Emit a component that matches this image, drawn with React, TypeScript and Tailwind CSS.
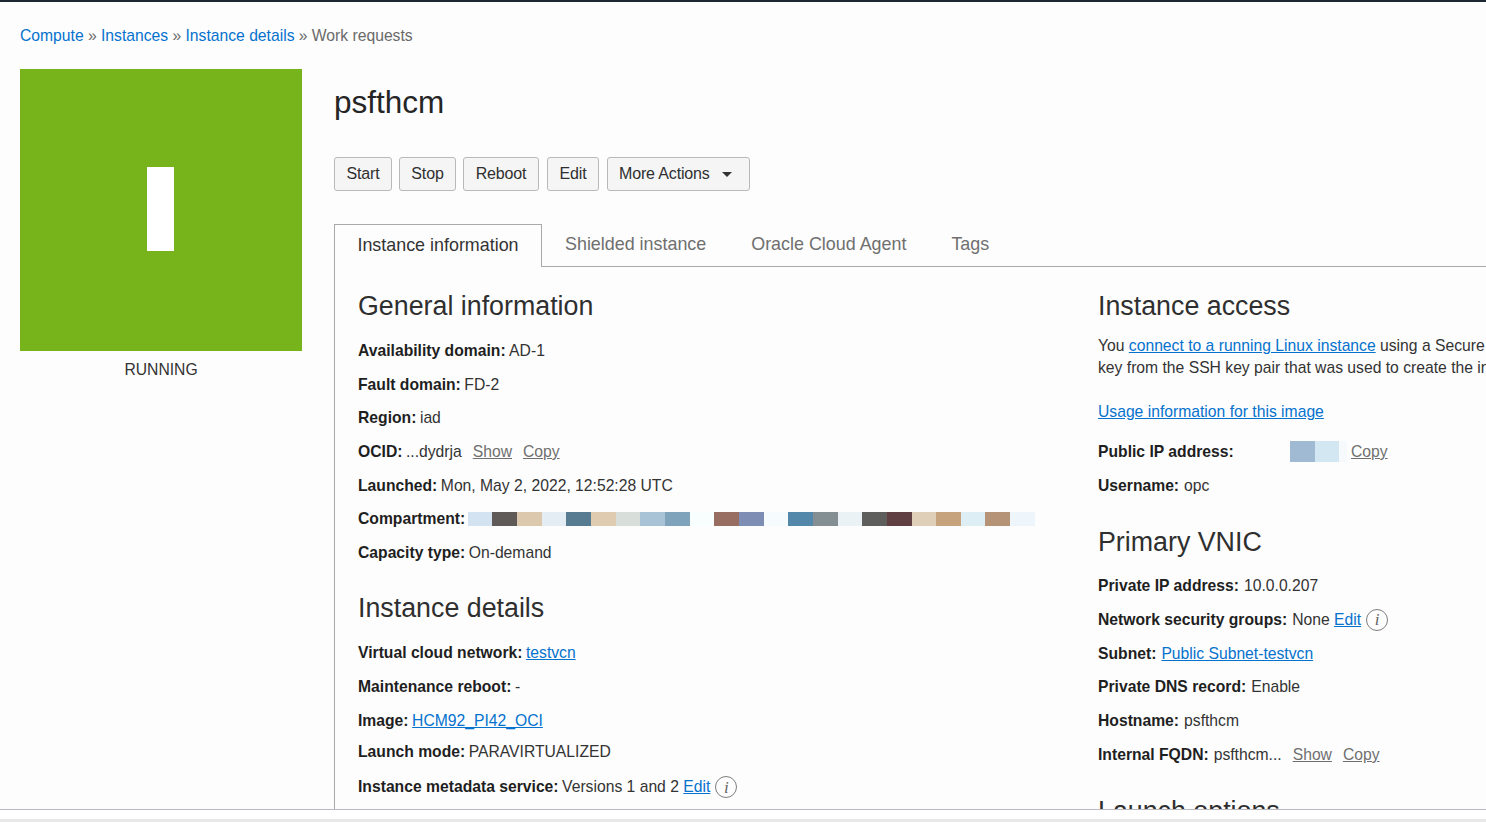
import React from "react";

const compartment = [
  "bg-[#d3e3f2]", "bg-[#5f5a57]", "bg-[#dcc8ac]", "bg-[#e3edf3]", "bg-[#577c91]", "bg-[#decbb0]",
  "bg-[#d8dfdb]", "bg-[#a8c3d6]", "bg-[#7fa3ba]", "bg-[#f8fdfe]", "bg-[#986e62]", "bg-[#7d8db3]",
  "bg-[#f6fcfd]", "bg-[#5488ab]", "bg-[#838f92]", "bg-[#ebf2f5]", "bg-[#5e5f5d]", "bg-[#5f3f42]",
  "bg-[#dfcfb9]", "bg-[#c6a37d]", "bg-[#deeef5]", "bg-[#b59377]", "bg-[#eef6fc]",
];

const A = ({ children }: { children: React.ReactNode }) => (
  <a className="text-[#0572ce] underline">{children}</a>
);
const G = ({ children, cls = "" }: { children: React.ReactNode; cls?: string }) => (
  <a className={`text-[#6f6f6f] underline ${cls}`}>{children}</a>
);
const Info = () => (
  <span className="ml-[5px] inline-flex h-[22px] w-[22px] items-center justify-center rounded-full border-[1.5px] border-[#7d7d7d] font-['Liberation_Serif',serif] text-[17px] italic leading-none text-[#666]">
    i
  </span>
);
const Row = ({ label, children, cls = "", gap = "mr-[3.5px]" }: { label: string; children?: React.ReactNode; cls?: string; gap?: string }) => (
  <div className={`flex h-[33.7px] items-center whitespace-nowrap ${cls}`}>
    <b className={`font-bold text-[#1f1f1f] ${gap}`}>{label}</b>
    {children}
  </div>
);
const RowR = (props: { label: string; children?: React.ReactNode }) => <Row {...props} gap="mr-[5px]" />;
const Btn = ({ children, cls }: { children: React.ReactNode; cls: string }) => (
  <button className={`flex h-[34px] items-center justify-center rounded-[3px] border border-[#b9b9b9] bg-[#f5f5f6] text-[16px] text-[#2f2f2f] tracking-[-0.15px] ${cls}`}>
    {children}
  </button>
);
const H = ({ children, cls = "" }: { children: React.ReactNode; cls?: string }) => (
  <h2 className={`text-[26.8px] leading-[32px] font-normal text-[#2f2f2f] ${cls}`}>{children}</h2>
);

export default function App() {
  return (
    <div className="flex h-[822px] w-[1486px] flex-col overflow-hidden bg-[#fdfdfd] font-['Liberation_Sans',Arial,sans-serif] text-[15.7px] leading-[18px] text-[#333]">
      <div className="h-[2px] shrink-0 bg-[#1c2733]" />
      <main className="min-h-0 flex-1 overflow-hidden pl-[20px]">
        <nav className="flex h-[67px] items-center whitespace-nowrap text-[#6a6a6a]">
          <a className="text-[#0572ce]">Compute</a>
          <span className="mx-[4.3px]">»</span>
          <a className="text-[#0572ce]">Instances</a>
          <span className="mx-[4.3px]">»</span>
          <a className="text-[#0572ce]">Instance details</a>
          <span className="mx-[4.3px]">»</span>
          <span>Work requests</span>
        </nav>
        <div className="flex gap-[32px]">
          <aside className="w-[282px] shrink-0">
            <div className="flex h-[282px] items-center justify-center bg-[#77b31a]">
              <div className="mb-[2px] mr-[1px] h-[84px] w-[27px] bg-white" />
            </div>
            <div className="mt-[10px] text-center text-[#333]">RUNNING</div>
          </aside>
          <section className="min-w-0 flex-1">
            <h1 className="mt-[14px] text-[31.5px] leading-[38px] font-normal text-[#252525]">psfthcm</h1>
            <div className="mt-[36px] flex">
              <Btn cls="w-[58px]">Start</Btn>
              <Btn cls="ml-[7px] w-[57px]">Stop</Btn>
              <Btn cls="ml-[7px] w-[76px]">Reboot</Btn>
              <Btn cls="ml-[8px] w-[52px]">Edit</Btn>
              <Btn cls="ml-[8px] w-[143px] !justify-start pl-[11px]">
                More Actions
                <span className="ml-[12px] h-0 w-0 border-x-[5.5px] border-t-[5.5px] border-x-transparent border-t-[#333]" />
              </Btn>
            </div>
            <div className="mt-[33px] flex h-[43px] whitespace-nowrap border-b border-[#a9a9a9] text-[17.9px]">
              <div className="flex h-[43px] w-[208px] items-center justify-center border border-b-0 border-[#a9a9a9] bg-[#fdfdfd] pb-[2px] text-[#333]">
                Instance information
              </div>
              <div className="flex gap-[45px] pl-[23px] pt-[11px] text-[#6f6f6f]">
                <span>Shielded instance</span>
                <span>Oracle Cloud Agent</span>
                <span>Tags</span>
              </div>
            </div>
            <div className="flex h-[600px] w-[1152px] border-l border-[#a9a9a9] pl-[23px]">
              <div className="w-[740px] shrink-0">
                <H cls="mt-[23px] mb-[12px]">General information</H>
                <Row label="Availability domain:">AD-1</Row>
                <Row label="Fault domain:">FD-2</Row>
                <Row label="Region:">iad</Row>
                <Row label="OCID:">
                  ...dydrja
                  <G cls="ml-[11px]">Show</G>
                  <G cls="ml-[11px]">Copy</G>
                </Row>
                <Row label="Launched:">Mon, May 2, 2022, 12:52:28 UTC</Row>
                <Row label="Compartment:">
                  <span className="-ml-[1px] flex h-[14px] w-[567px]">
                    {compartment.map((c, i) => (
                      <span key={i} className={`flex-1 ${c}`} />
                    ))}
                  </span>
                </Row>
                <Row label="Capacity type:">On-demand</Row>
                <H cls="mt-[22px] mb-[12.6px]">Instance details</H>
                <Row label="Virtual cloud network:"><A>testvcn</A></Row>
                <Row label="Maintenance reboot:">-</Row>
                <Row label="Image:"><A>HCM92_PI42_OCI</A></Row>
                <Row label="Launch mode:" cls="-mt-[2px]">PARAVIRTUALIZED</Row>
                <Row label="Instance metadata service:" cls="mt-[1px]">
                  Versions 1 and 2&nbsp;<A>Edit</A>
                  <Info />
                </Row>
              </div>
              <div className="w-[620px] shrink-0">
                <H cls="mt-[23px] mb-[13px]">Instance access</H>
                <p className="whitespace-nowrap leading-[22px]">
                  You <A>connect to a running Linux instance</A> using a Secure Shell (SSH) connection. You'll need the private
                  <br />
                  key from the SSH key pair that was used to create the instance.
                </p>
                <p className="mt-[22px] leading-[22px]"><A>Usage information for this image</A></p>
                <div className="mt-[12px] flex h-[33.7px] items-center whitespace-nowrap">
                  <b className="w-[192px] font-bold text-[#1f1f1f]">Public IP address:</b>
                  <span className="flex h-[21px]">
                    <span className="w-[25px] bg-[#a0bad3]" />
                    <span className="w-[24px] bg-[#d2e7f1]" />
                    <span className="w-[8px] bg-[#f6fafd]" />
                  </span>
                  <G cls="ml-[4px]">Copy</G>
                </div>
                <RowR label="Username:">opc</RowR>
                <H cls="mt-[24px] mb-[11px]">Primary VNIC</H>
                <RowR label="Private IP address:">10.0.0.207</RowR>
                <RowR label="Network security groups:">
                  None&nbsp;<A>Edit</A>
                  <Info />
                </RowR>
                <RowR label="Subnet:"><A>Public Subnet-testvcn</A></RowR>
                <RowR label="Private DNS record:">Enable</RowR>
                <RowR label="Hostname:">psfthcm</RowR>
                <RowR label="Internal FQDN:">
                  psfthcm...
                  <G cls="ml-[11px]">Show</G>
                  <G cls="ml-[11px]">Copy</G>
                </RowR>
                <H cls="mt-[23px]">Launch options</H>
              </div>
            </div>
          </section>
        </div>
      </main>
      <footer className="h-[13px] shrink-0 border-t border-[#b9b9c0] bg-white">
        <div className="mt-[9px] h-[3px] bg-[#e8e8e8]" />
      </footer>
    </div>
  );
}
